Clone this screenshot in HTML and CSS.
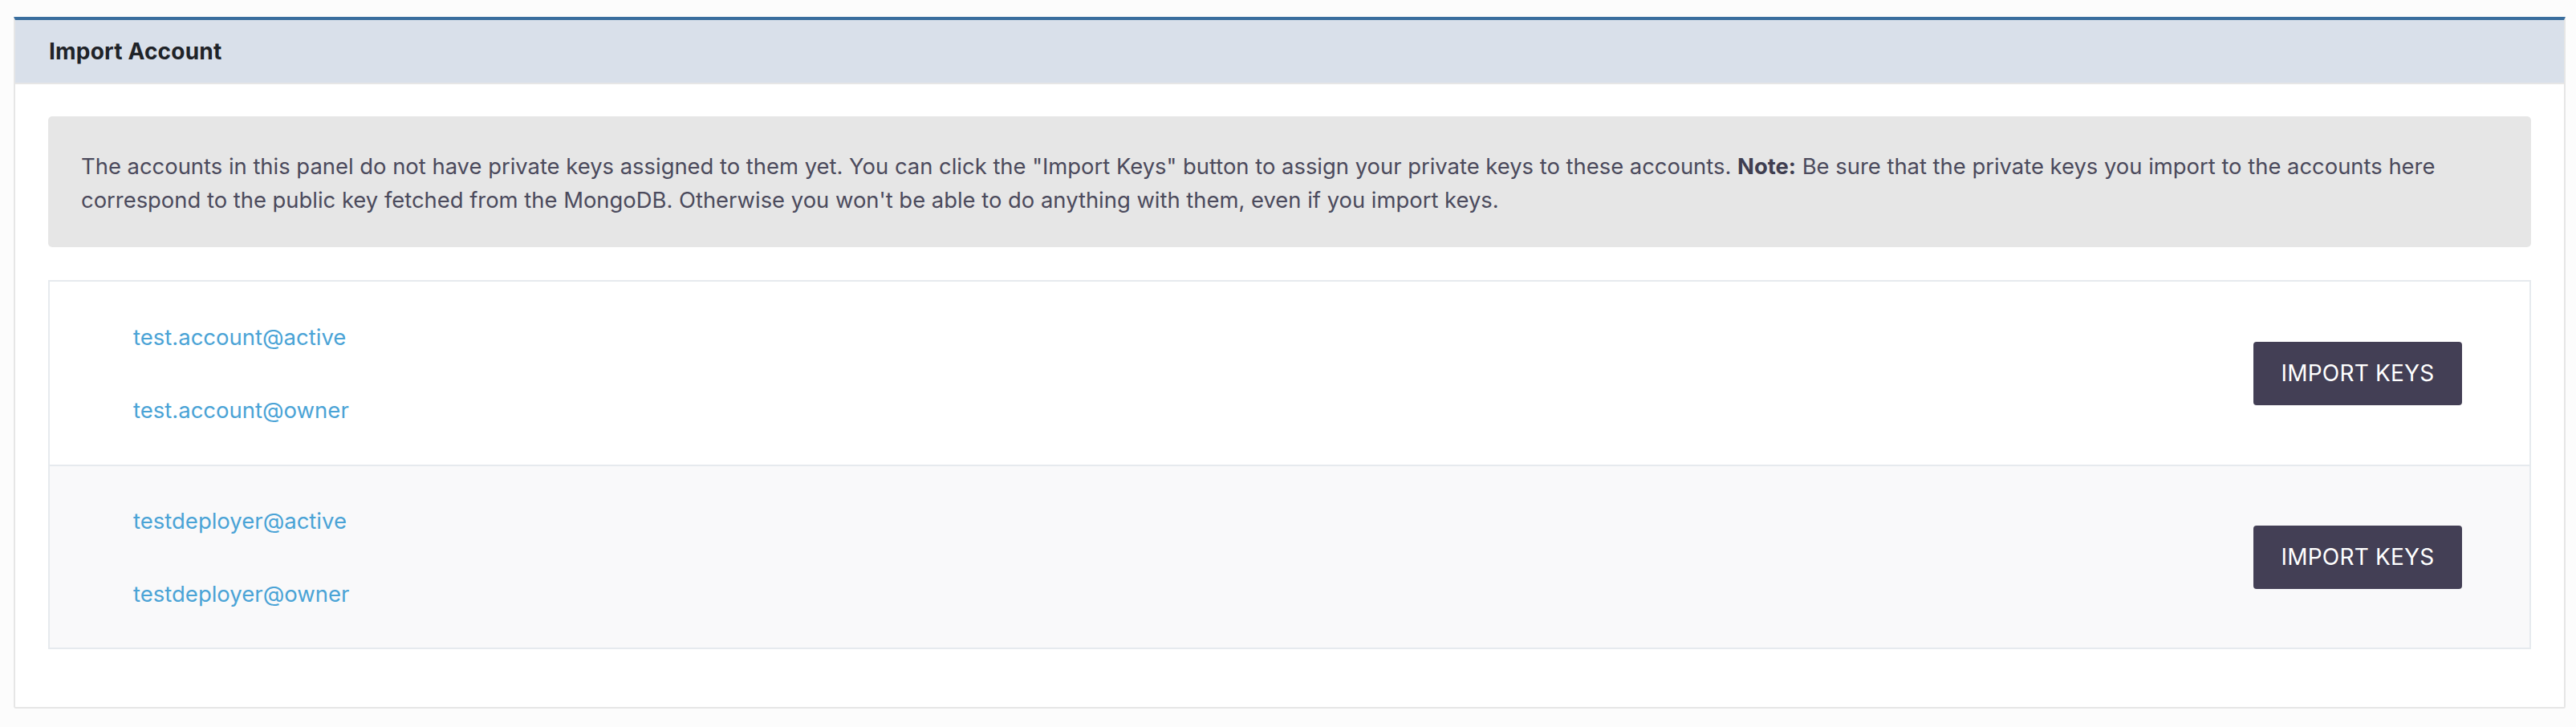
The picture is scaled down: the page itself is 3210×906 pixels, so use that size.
FILE: index.html
```html
<!DOCTYPE html>
<html lang="en">
<head>
<meta charset="utf-8">
<title>Import Account</title>
<link rel="stylesheet" href="styles.css">
</head>
<body>
<section class="panel">
  <header class="panel-header">
    <h2 class="panel-title">Import Account</h2>
  </header>
  <div class="panel-body">
    <p class="alert">The accounts in this panel do not have private keys assigned to them yet. You can click the "Import Keys" button to assign your private keys to these accounts. <strong>Note:</strong> Be sure that the private keys you import to the accounts here correspond to the public key fetched from the MongoDB. Otherwise you won't be able to do anything with them, even if you import keys.</p>
    <ul class="list">
      <li class="row">
        <div class="names">
          <a class="name" href="#">test.account@active</a>
          <a class="name" href="#">test.account@owner</a>
        </div>
        <button class="btn" type="button">IMPORT KEYS</button>
      </li>
      <li class="row row-alt">
        <div class="names">
          <a class="name" href="#">testdeployer@active</a>
          <a class="name" href="#">testdeployer@owner</a>
        </div>
        <button class="btn" type="button">IMPORT KEYS</button>
      </li>
    </ul>
  </div>
</section>
</body>
</html>
```
FILE: styles.css
```css
html, body {
  margin: 0;
  padding: 0;
  background: #fcfcfc;
}
body {
  padding: 21px 13px 25px 17px;
  font-family: Inter, "Noto Sans", "Liberation Sans", sans-serif;
  color: #4b4a5c;
}
.panel {
  background: #ffffff;
  border: 2px solid #e6e6e6;
  border-top: 4px solid #3a6e9e;
  border-radius: 0 0 3px 3px;
}
.panel-header {
  background: #d9e0ea;
  height: 78px;
  border-bottom: 2px solid #e6e6e6;
  display: flex;
  align-items: center;
  padding: 0 42px;
}
.panel-title {
  margin: 0;
  font-size: 28px;
  font-weight: 700;
  color: #1f2328;
  letter-spacing: 0.2px;
}
.panel-body {
  padding: 40px 41px 72px 41px;
}
.alert {
  margin: 0;
  background: #e6e6e6;
  border-radius: 5px;
  padding: 41px 41px 38px 41px;
  font-size: 27.4px;
  line-height: 42px;
  color: #4b4a5c;
}
.alert strong {
  font-weight: 700;
  color: #3f3e50;
}
.list {
  list-style: none;
  margin: 41px 0 0 0;
  padding: 0;
  border: 2px solid #e6eaee;
}
.row {
  display: flex;
  align-items: center;
  justify-content: space-between;
  padding: 0 84px 0 104px;
  height: 228px;
  background: #ffffff;
}
.row-alt {
  background: #f9f9fa;
  border-top: 2px solid #e6eaee;
  height: 226px;
}
.names {
  display: flex;
  flex-direction: column;
  gap: 49px;
}
.name {
  display: block;
  font-size: 27.5px;
  line-height: 42px;
  color: #4aa3d6;
  text-decoration: none;
}
.btn {
  width: 260px;
  height: 79px;
  background: #433f55;
  color: #ffffff;
  border: none;
  border-radius: 4px;
  font-family: Inter, "Noto Sans", "Liberation Sans", sans-serif;
  font-size: 28px;
  font-weight: 400;
  letter-spacing: 0.2px;
  padding: 0;
}
```
